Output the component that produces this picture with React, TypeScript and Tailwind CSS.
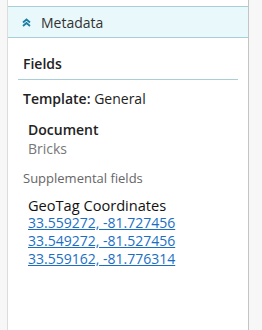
import React from "react";

export default function App() {
  return (
    <div className="w-[262px] h-[330px] bg-[#f7f7f7] flex" style={{ fontFamily: '"Open Sans", sans-serif' }}>
      <div className="ml-[7px] w-[242px] h-full bg-white border-l border-l-[#dcdcdc] border-r border-r-[#c4c4c4] flex flex-col">
        <div className="h-[6px]" />
        <div className="h-[32px] bg-[#e9f8fb] border-y border-[#a8cfd8] flex items-center pl-[14px]">
          <svg width="9" height="9" viewBox="0 0 9 9" className="text-[#1b7fa3]">
            <path d="M1 4.5 L4.5 1.5 L8 4.5" fill="none" stroke="currentColor" strokeWidth="1.8" />
            <path d="M1 8 L4.5 5 L8 8" fill="none" stroke="currentColor" strokeWidth="1.8" />
          </svg>
          <span className="ml-[10px] text-[14px] text-[#333]">Metadata</span>
        </div>
        <div className="px-[10px] pt-[16px]">
          <div className="pl-[5px] text-[14px] font-semibold text-[#222] leading-[20px] pb-[5px] border-b border-[#a8cfd8]">Fields</div>
          <div className="pl-[5px] mt-[9px] text-[14px] text-[#222] leading-[20px]">
            <span className="font-semibold">Template:</span> General
          </div>
          <div className="pl-[10px] mt-[11px] leading-[19px]">
            <div className="text-[14px] font-semibold text-[#222]">Document</div>
            <div className="text-[14px] text-[#777]">Bricks</div>
          </div>
          <div className="pl-[5px] mt-[11px] text-[13px] text-[#666] leading-[18px]">Supplemental fields</div>
          <div className="pl-[10px] mt-[9px] text-[14px] leading-[18px]">
            <div className="font-medium text-[14.6px] text-[#111]">GeoTag Coordinates</div>
            <div><a href="#" className="text-[#1a6fc4] underline">33.559272, -81.727456</a></div>
            <div><a href="#" className="text-[#1a6fc4] underline">33.549272, -81.527456</a></div>
            <div><a href="#" className="text-[#1a6fc4] underline">33.559162, -81.776314</a></div>
          </div>
        </div>
      </div>
    </div>
  );
}
